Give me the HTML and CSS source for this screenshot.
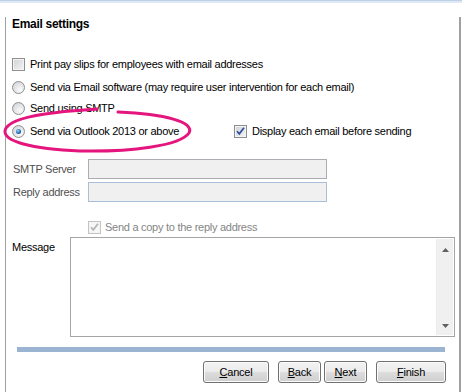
FILE: index.html
```html
<!DOCTYPE html>
<html lang="en">
<head>
    <meta charset="UTF-8">
    <meta name="viewport" content="width=device-width, initial-scale=1.0">
    <title>Email settings</title>
    <link rel="stylesheet" href="styles.css">
</head>
<body>
<div class="window">
    <div class="topbar"></div>
    <div class="panel">
        <h1>Email settings</h1>

        <div class="opt row1">
            <span class="box"></span>
            <span>Print pay slips for employees with email addresses</span>
        </div>
        <div class="opt row2">
            <span class="radio"></span>
            <span>Send via Email software (may require user intervention for each email)</span>
        </div>
        <div class="opt row3">
            <span class="radio"></span>
            <span>Send using SMTP</span>
        </div>
        <div class="opt row4">
            <div class="opt-main">
                <span class="radio on"></span>
                <span>Send via Outlook 2013 or above</span>
            </div>
            <span class="box">
                <svg width="11" height="11" viewBox="0 0 11 11"><path d="M2 5.2 L4.3 7.8 L9 1.8" fill="none" stroke="#2f4f9e" stroke-width="1.7"/></svg>
            </span>
            <span>Display each email before sending</span>
        </div>

        <div class="fields">
            <label class="dim">SMTP Server</label>
            <div class="field"></div>
            <label class="dim">Reply address</label>
            <div class="field reply"></div>
        </div>

        <div class="opt copy">
            <span class="box off">
                <svg width="11" height="11" viewBox="0 0 11 11"><path d="M2 5.2 L4.3 7.8 L9 1.8" fill="none" stroke="#b4b4b4" stroke-width="1.7"/></svg>
            </span>
            <span class="grey">Send a copy to the reply address</span>
        </div>

        <div class="message">
            <label>Message</label>
            <div class="msg">
                <div class="scroll">
                    <svg width="7" height="4" viewBox="0 0 7 4"><path d="M0 4 L3.5 0 L7 4 Z" fill="#606060"/></svg>
                    <svg width="7" height="4" viewBox="0 0 7 4"><path d="M0 0 L3.5 4 L7 0 Z" fill="#606060"/></svg>
                </div>
            </div>
        </div>

        <div class="progress"></div>

        <div class="buttons">
            <button class="btn cancel"><u>C</u>ancel</button>
            <button class="btn back"><u>B</u>ack</button>
            <button class="btn next"><u>N</u>ext</button>
            <button class="btn finish"><u>F</u>inish</button>
        </div>
    </div>
    <div class="strip"></div>
    <div class="cyan"></div>

    <!-- hand drawn highlight round the Outlook option -->
    <svg class="mark" width="462" height="392" viewBox="0 0 462 392">
        <path d="M97 109 C80 110 60 112 45 114 C25 117 6 122 5 131 C4 141 30 149 80 151 C130 152 180 146 189 133 C195 122 165 114 118 112" fill="none" stroke="#e5157e" stroke-width="3" stroke-linecap="round"/>
    </svg>
</div>
</body>
</html>
```

FILE: styles.css
```css
body {
    margin: 0;
    font-family: "Liberation Sans", Arial, sans-serif;
    font-size: 11px;
    letter-spacing: -0.27px;
    color: #000;
    background: #fff;
}
.window {
    position: relative;
    width: 462px;
    height: 392px;
    overflow: hidden;
}
.topbar {
    height: 3px;
    box-sizing: border-box;
    border-top: 1px solid #bfd1e6;
    background: #dfe9f4;
}
.panel {
    box-sizing: border-box;
    width: 456px;
    height: 381px;
    margin-left: 5px;
    padding-left: 6px;
    border-left: 1px solid #a0a0a0;
    border-right: 2px solid #a0a0a0;
    background: #fff;
}
h1 {
    margin: 14px 0 0;
    font-size: 12px;
    line-height: 14px;
    font-weight: bold;
    letter-spacing: -0.3px;
}
.opt {
    display: flex;
    align-items: center;
    height: 16px;
    gap: 5px;
    white-space: nowrap;
}
.row1 { margin-top: 25px; }
.row2 { margin-top: 7px; }
.row3 { margin-top: 5px; }
.row4 { margin-top: 7px; }
.opt-main {
    display: flex;
    align-items: center;
    gap: 5px;
    width: 217px;
}
.box {
    display: inline-block;
    flex: none;
    width: 13px;
    height: 13px;
    box-sizing: border-box;
    border: 1px solid #8e8f8f;
    background: linear-gradient(135deg, #cfd2d7, #f4f4f4);
    box-shadow: inset 0 0 0 1px #f4f4f4;
}
.box svg {
    display: block;
}
.box.off {
    border-color: #c4c4c4;
    background: #f6f6f6;
}
.radio {
    display: inline-flex;
    align-items: center;
    justify-content: center;
    flex: none;
    width: 13px;
    height: 13px;
    box-sizing: border-box;
    border: 1px solid #8e8f8f;
    border-radius: 50%;
    background: radial-gradient(circle at 65% 70%, #fbfbfb, #d4d7db 80%);
}
.radio.on::after {
    content: "";
    width: 5px;
    height: 5px;
    border-radius: 50%;
    background: radial-gradient(circle at 40% 35%, #9ad8f4, #1d63ad 60%, #123f80);
}
.fields {
    display: grid;
    grid-template-columns: 76px 239px;
    grid-auto-rows: 20px;
    row-gap: 3px;
    margin-top: 20px;
}
.fields label {
    display: flex;
    align-items: center;
    padding-left: 1px;
}
.dim {
    color: #505050;
}
.field {
    box-sizing: border-box;
    border: 1px solid #abadb3;
    background: #f0f0f0;
}
.field.reply {
    border-color: #a9bfd9;
}
.copy {
    margin-top: 18px;
    height: 14px;
    padding-left: 76px;
    gap: 4px;
}
.grey {
    color: #858585;
}
.message {
    display: flex;
    margin-top: 3px;
}
.message label {
    width: 58px;
    margin-top: 4px;
    line-height: 13px;
}
.msg {
    display: flex;
    justify-content: flex-end;
    box-sizing: border-box;
    width: 385px;
    height: 100px;
    padding: 1px;
    border: 1px solid #a5a5a5;
    background: #fff;
}
.scroll {
    display: flex;
    flex-direction: column;
    justify-content: space-between;
    align-items: center;
    box-sizing: border-box;
    width: 17px;
    padding: 9px 0 7px;
    background: #f0f0f0;
    border-left: 1px solid #ececec;
}
.scroll svg {
    display: block;
}
.progress {
    width: 428px;
    height: 5px;
    margin: 10px 0 0 5px;
    background: #9ab4d2;
}
.buttons {
    display: flex;
    justify-content: flex-end;
    width: 434px;
    margin-top: 9px;
}
.btn {
    height: 22px;
    padding: 0;
    font-family: "Liberation Sans", Arial, sans-serif;
    font-size: 11px;
    letter-spacing: -0.2px;
    color: #000;
    border: 1px solid #707070;
    border-radius: 3px;
    background: linear-gradient(#f2f2f2, #ebebeb 50%, #dddddd 50%, #cfcfcf);
    box-shadow: inset 0 0 0 1px #fcfcfc;
}
.cancel { width: 66px; margin-right: 9px; }
.back { width: 43px; margin-right: 3px; }
.next { width: 43px; margin-right: 9px; }
.finish { width: 70px; }
.strip {
    box-sizing: border-box;
    width: 456px;
    height: 4px;
    margin-left: 5px;
    border-left: 1px solid #a0a0a0;
    background: #efefef;
}
.cyan {
    height: 3px;
    margin-left: 5px;
    background: #38c4e8;
}
.mark {
    position: absolute;
    top: 0;
    left: 0;
    pointer-events: none;
}
```
